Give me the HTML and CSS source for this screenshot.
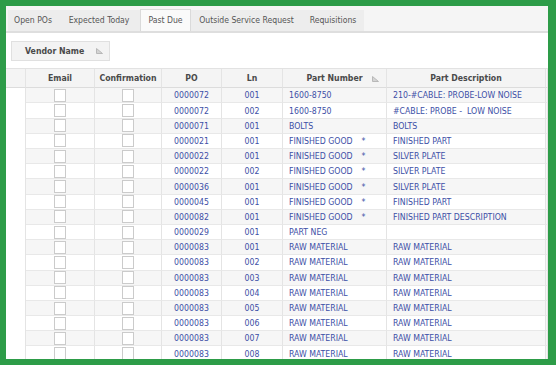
FILE: index.html
```html
<html>
  <head>
    <title>Purchase Orders</title>
    <link rel="stylesheet" href="styles.css">
  </head>
  <body>
  <div class="frame">
    <div class="tabStrip">
      <div class="tab tabOpen">Open POs</div>
      <div class="tab tabExpected">Expected Today</div>
      <div class="tab tabPast active">Past Due</div>
      <div class="tab tabOutside">Outside Service Request</div>
      <div class="tab tabReq">Requisitions</div>
    </div>

    <div class="groupBar">
      <div class="groupChip">
        <span>Vendor Name</span>
        <svg class="sortIcon" width="7" height="6" viewBox="0 0 7 6"><polygon points="0.5,0.5 0.5,5.5 6.5,5.5" fill="#d4d4d4" stroke="#b8b8b8" stroke-width="1"/></svg>
      </div>
    </div>

    <div class="grid">
      <div class="row head">
        <div class="cell"></div>
        <div class="cell center">Email</div>
        <div class="cell center">Confirmation</div>
        <div class="cell center">PO</div>
        <div class="cell center">Ln</div>
        <div class="cell center sorted"><span>Part Number</span><svg class="sortIcon headSort" width="7" height="6" viewBox="0 0 7 6"><polygon points="0.5,0.5 0.5,5.5 6.5,5.5" fill="#d4d4d4" stroke="#b8b8b8" stroke-width="1"/></svg></div>
        <div class="cell center">Part Description</div>
        <div class="cell filler"></div>
      </div>
      <div id="rows"></div>
    </div>
  </div>

  <script>
    const lines = [
      ["0000072", "001", "1600-8750", false, "210-#CABLE: PROBE-LOW NOISE"],
      ["0000072", "002", "1600-8750", false, "#CABLE: PROBE -  LOW NOISE"],
      ["0000071", "001", "BOLTS", false, "BOLTS"],
      ["0000021", "001", "FINISHED GOOD", true, "FINISHED PART"],
      ["0000022", "001", "FINISHED GOOD", true, "SILVER PLATE"],
      ["0000022", "002", "FINISHED GOOD", true, "SILVER PLATE"],
      ["0000036", "001", "FINISHED GOOD", true, "SILVER PLATE"],
      ["0000045", "001", "FINISHED GOOD", true, "FINISHED PART"],
      ["0000082", "001", "FINISHED GOOD", true, "FINISHED PART DESCRIPTION"],
      ["0000029", "001", "PART NEG", false, ""],
    ];
    for (let i = 1; i <= 8; i++) {
      lines.push(["0000083", "00" + i, "RAW MATERIAL", false, "RAW MATERIAL"]);
    }

    const rowsEl = document.getElementById("rows");
    lines.forEach((line, i) => {
      const row = document.createElement("div");
      row.className = "row" + (i % 2 === 0 ? " odd" : "");
      const flag = line[3] ? '<span class="flag">*</span>' : "";
      row.innerHTML =
        '<div class="cell lead"></div>' +
        '<div class="cell center"><span class="check"></span></div>' +
        '<div class="cell center"><span class="check"></span></div>' +
        '<div class="cell center data">' + line[0] + '</div>' +
        '<div class="cell center data">' + line[1] + '</div>' +
        '<div class="cell data">' + line[2] + flag + '</div>' +
        '<div class="cell data">' + line[4] + '</div>' +
        '<div class="cell filler"></div>';
      rowsEl.appendChild(row);
    });
  </script>
  </body>
</html>
```

FILE: styles.css
```css
html {
  background-color: #2d9c48;
}

body {
  margin: 0;
  font-family: "DejaVu Sans Condensed", "DejaVu Sans", sans-serif;
  font-stretch: condensed;
  font-size: 8.7px;
}

.frame {
  margin: 6px 8px 0 6px;
  height: 353px;
  background-color: #ffffff;
  overflow: hidden;
}

/* tabs */
.tabStrip {
  display: flex;
  height: 25px;
  padding-left: 2px;
  background-color: #f5f5f5;
  border-bottom: 2px solid #dedede;
  align-items: flex-end;
}

.tab {
  height: 21px;
  line-height: 21px;
  text-align: center;
  color: #555555;
  background-color: #ededed;
  font-size: 8.6px;
}

.tab.active {
  background-color: #fafafa;
  border: 1px solid #dadada;
  border-bottom: none;
  height: 21px;
  line-height: 21px;
}

.tabOpen { width: 50px; }
.tabExpected { width: 82px; }
.tabPast { width: 49px; }
.tabOutside { width: 111px; }
.tabReq { width: 62px; }

/* group by area */
.groupBar {
  height: 35px;
  padding: 8px 0 0 5px;
  box-sizing: border-box;
}

.groupChip {
  display: flex;
  align-items: center;
  width: 99px;
  height: 20px;
  box-sizing: border-box;
  padding-left: 13px;
  background-color: #f3f3f3;
  border: 1px solid #e0e0e0;
  font-weight: bold;
  color: #4a4a4a;
}

.groupChip .sortIcon {
  margin-left: 12px;
}

/* grid */
.row {
  display: grid;
  grid-template-columns: 20px 69px 67px 60px 61px 104px 159px 2px;
  height: 15.2px;
}

.row.head {
  height: 20.3px;
  background-color: #f4f4f4;
  border-top: 1px solid #e2e2e2;
  box-sizing: border-box;
  font-weight: bold;
  color: #4a4a4a;
}

.cell {
  border-right: 1px solid #e4e4e4;
  border-bottom: 1px solid #e8e8e8;
  box-sizing: border-box;
  display: flex;
  align-items: center;
  padding-left: 6px;
  white-space: pre;
  overflow: hidden;
}

.cell.center {
  justify-content: center;
  padding-left: 0;
}

.head .cell {
  border-bottom: 1px solid #dcdcdc;
  white-space: nowrap;
}

.sorted {
  position: relative;
}

.headSort {
  position: absolute;
  right: 7px;
  top: 7px;
}

.row.odd .cell {
  background-color: #f6f6f6;
}

.row.odd .cell.lead {
  background-color: #ffffff;
}

.cell.lead {
  border-bottom: none;
}

.cell.filler {
  background-color: #f7f7f7;
  padding-left: 0;
}

.data {
  color: #3d4fa6;
}

.flag {
  margin-left: 9px;
}

.check {
  width: 12px;
  height: 13px;
  box-sizing: border-box;
  border: 1px solid #cbcbcb;
  background-color: #ffffff;
}
```
